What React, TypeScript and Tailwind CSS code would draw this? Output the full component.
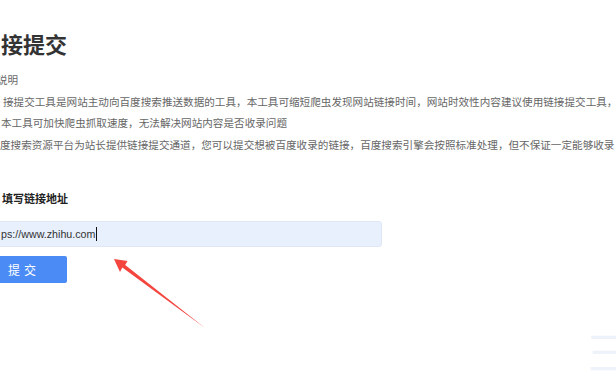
import React from 'react';

const font = { fontFamily: '"Microsoft YaHei", "Noto Sans CJK SC", "Noto Sans", sans-serif' };

export default function App() {
  return (
    <div className="relative w-[616px] h-[380px] overflow-hidden bg-white" style={font}>
      <div className="pt-[28px]">
        {/* Title */}
        <h1 className="ml-[1px] text-[22px] leading-[30px] font-bold text-[#333] whitespace-nowrap">接提交</h1>

        {/* Description */}
        <div className="mt-[11px] text-[10.6px] leading-[21px] text-[#666] whitespace-nowrap">
          <p className="ml-[-3px]">说明</p>
          <p className="ml-[3px] mt-[1px]">接提交工具是网站主动向百度搜索推送数据的工具，本工具可缩短爬虫发现网站链接时间，网站时效性内容建议使用链接提交工具，</p>
          <p className="ml-[1px]">本工具可加快爬虫抓取速度，无法解决网站内容是否收录问题</p>
          <p className="mt-[1px]">度搜索资源平台为站长提供链接提交通道，您可以提交想被百度收录的链接，百度搜索引擎会按照标准处理，但不保证一定能够收录</p>
        </div>

        {/* Form */}
        <div className="mt-[35px] ml-[2px] text-[11px] leading-[16px] font-bold text-[#222] whitespace-nowrap">填写链接地址</div>

        <div className="mt-[15px] ml-[-50px] w-[432px] h-[26px] flex items-center pl-[50px] bg-[#e8f0fe] border border-[#dfe7f6] rounded-[3px] text-[10.7px] text-[#333]" style={{ fontFamily: '"Liberation Sans", Arial, sans-serif' }}>
          <span>ps://www.zhihu.com</span>
          <span className="inline-block w-[1px] h-[14px] bg-[#111] ml-[1px]" />
        </div>

        <button className="mt-[9px] ml-[-23px] w-[90px] h-[27px] flex items-center justify-center bg-[#4b8bf5] rounded-[2px] text-[12px] text-white tracking-[4px]">
          <span className="pl-[4px]">提交</span>
        </button>
      </div>

      {/* Annotation arrow */}
      <svg className="absolute left-0 top-0 pointer-events-none" width="616" height="380" viewBox="0 0 616 380">
        <polygon points="114,259 127.5,261 125.2,265 205,328 122.3,267.6 120,272" fill="#f4453e" />
      </svg>

      {/* Faint watermark */}
      <span className="absolute left-[586px] top-[326px] text-[44px] leading-[50px] text-[#eef2fb] select-none">彐</span>
    </div>
  );
}
